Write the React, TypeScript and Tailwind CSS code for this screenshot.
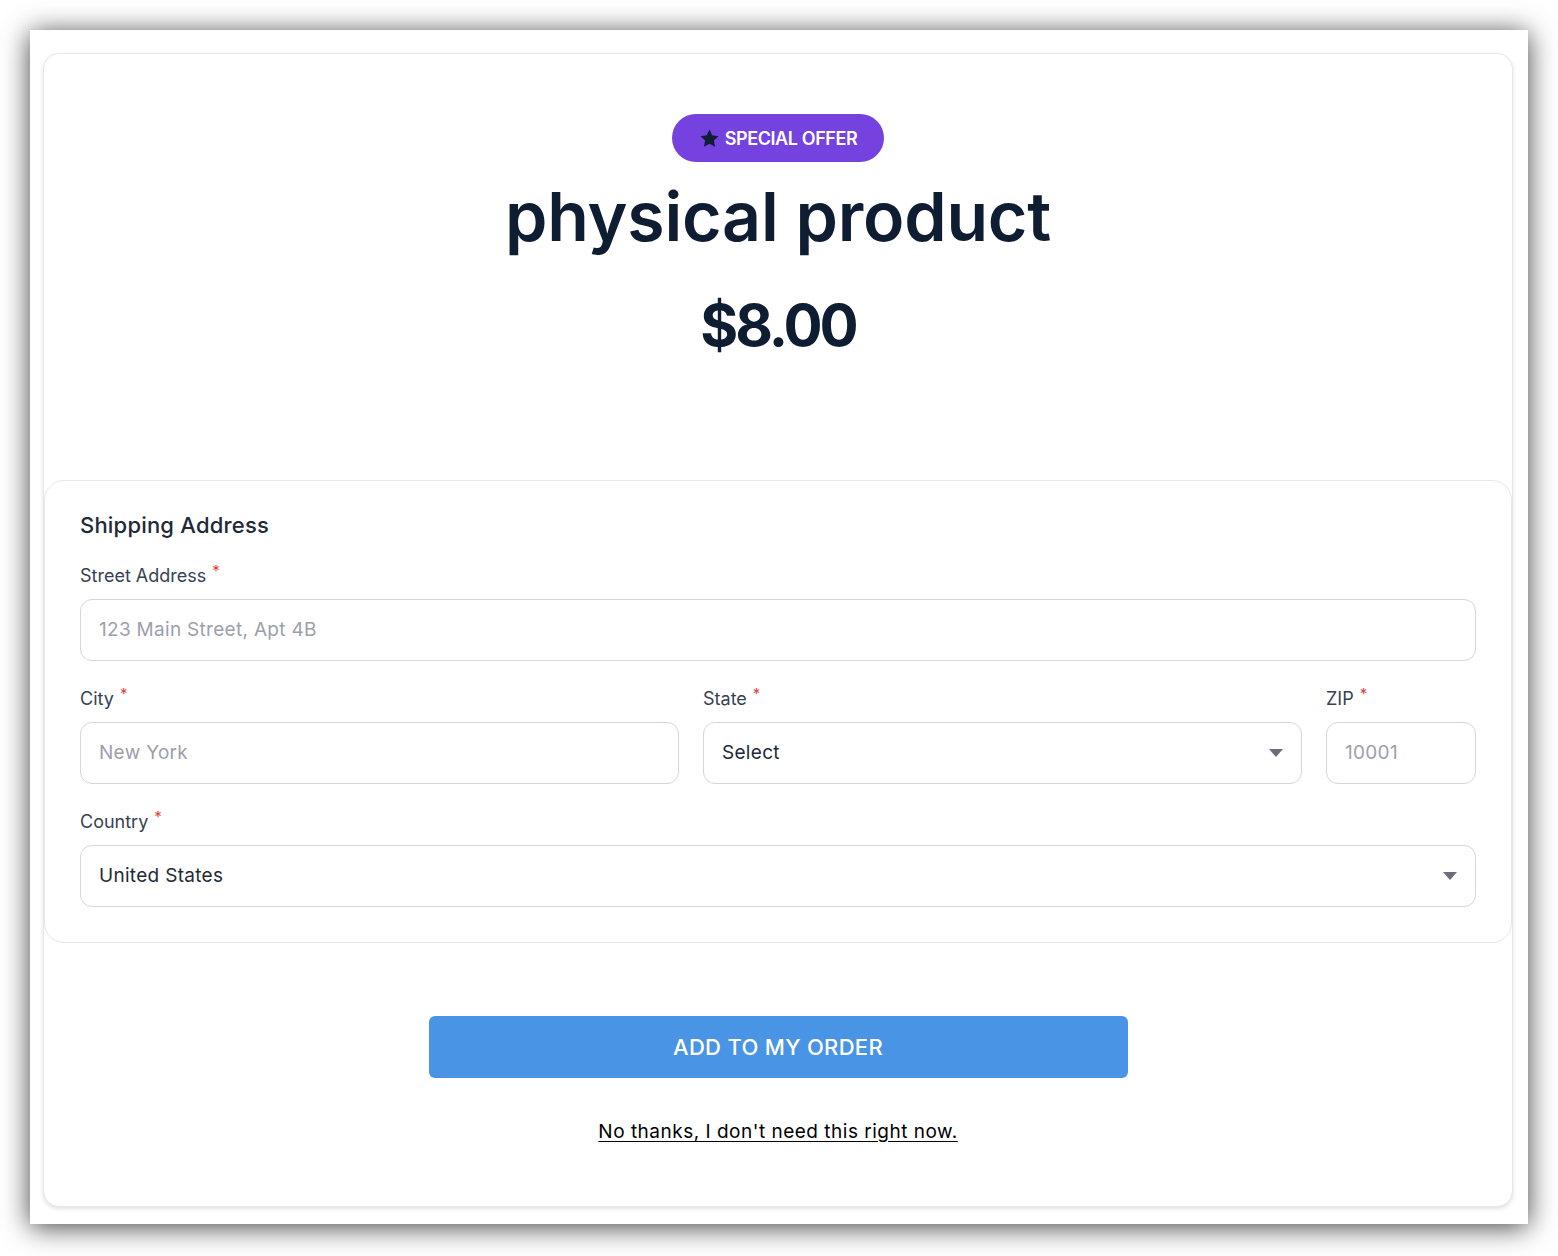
import React from 'react'

const font = { fontFamily: 'Inter, "Noto Sans", sans-serif' }

function Star() {
  return (
    <svg width="21" height="21" viewBox="0 0 24 24" className="fill-[#0f1d35]">
      <path d="M12 1.8l3.1 6.6 7.2.9-5.3 5 1.4 7.1L12 17.9l-6.4 3.5L7 14.3l-5.3-5 7.2-.9z" />
    </svg>
  )
}

function Caret() {
  return (
    <svg width="14" height="8" viewBox="0 0 14 8" className="fill-[#6b6e7a]">
      <path d="M0 0h14L7 8z" />
    </svg>
  )
}

function Label({ children }: { children: React.ReactNode }) {
  return (
    <div className="flex items-start gap-[6px] text-[18px] leading-[24px] text-[#374151] mb-[11px]">
      <span>{children}</span>
      <span className="text-[#e53e3e] text-[15px] leading-[15px] mt-[-1px]">*</span>
    </div>
  )
}

function Field({ placeholder }: { placeholder: string }) {
  return (
    <div className="h-[62px] rounded-[12px] border border-[#d4d6dd] flex items-center px-[18px] text-[19px] tracking-[0.3px] text-[#9ca0ab]">
      {placeholder}
    </div>
  )
}

function SelectBox({ value }: { value: string }) {
  return (
    <div className="h-[62px] rounded-[12px] border border-[#d4d6dd] flex items-center justify-between pl-[18px] pr-[18px] text-[19px] tracking-[0.3px] text-[#1f2937]">
      <span>{value}</span>
      <Caret />
    </div>
  )
}

export default function App() {
  return (
    <div className="min-h-[1256px] bg-white p-[30px] pb-[32px]" style={font}>
      <div className="bg-white h-[1194px] shadow-[0_3px_26px_rgba(0,0,0,0.75)] pt-[23px] pl-[13px] pr-[15px] pb-[17px]">
        <div className="h-full rounded-[16px] border border-[#e6e7eb] shadow-[0_2px_4px_rgba(0,0,0,0.12)] bg-white flex flex-col">
          <div className="flex flex-col items-center pt-[60px] h-[426px]">
            <div className="h-[48px] px-[27px] rounded-full bg-[#7542e0] flex items-center gap-[5px] text-white text-[18px] font-semibold tracking-[-0.4px]">
              <Star />
              <span>SPECIAL OFFER</span>
            </div>
            <h1 className="mt-[14px] text-[68px] leading-[80px] font-semibold text-[#0f1d33] tracking-[-0.2px]">
              physical product
            </h1>
            <div className="mt-[34px] text-[58px] leading-[70px] font-bold text-[#0f1d33] tracking-[-3px]">
              $8.00
            </div>
          </div>

          <div className="rounded-[20px] border border-[#e6e7eb] pl-[35px] pr-[35px] pt-[28px] pb-[35px]">
            <h2 className="text-[22px] leading-[32px] font-medium text-[#1f2937] tracking-[0.2px] mb-[23px]">Shipping Address</h2>
            <Label>Street Address</Label>
            <Field placeholder="123 Main Street, Apt 4B" />
            <div className="flex gap-[24px] mt-[26px]">
              <div className="flex-1">
                <Label>City</Label>
                <Field placeholder="New York" />
              </div>
              <div className="flex-1">
                <Label>State</Label>
                <SelectBox value="Select" />
              </div>
              <div className="w-[150px]">
                <Label>ZIP</Label>
                <Field placeholder="10001" />
              </div>
            </div>
            <div className="mt-[26px]">
              <Label>Country</Label>
              <SelectBox value="United States" />
            </div>
          </div>

          <div className="flex flex-col items-center pt-[73px]">
            <button className="w-[699px] h-[62px] rounded-[6px] bg-[#4a94e5] text-white text-[22px] font-medium tracking-[0.3px]">
              ADD TO MY ORDER
            </button>
            <a className="mt-[41px] text-[19px] leading-[26px] tracking-[0.5px] text-black underline underline-offset-[3px]">
              No thanks, I don't need this right now.
            </a>
          </div>
        </div>
      </div>
    </div>
  )
}
